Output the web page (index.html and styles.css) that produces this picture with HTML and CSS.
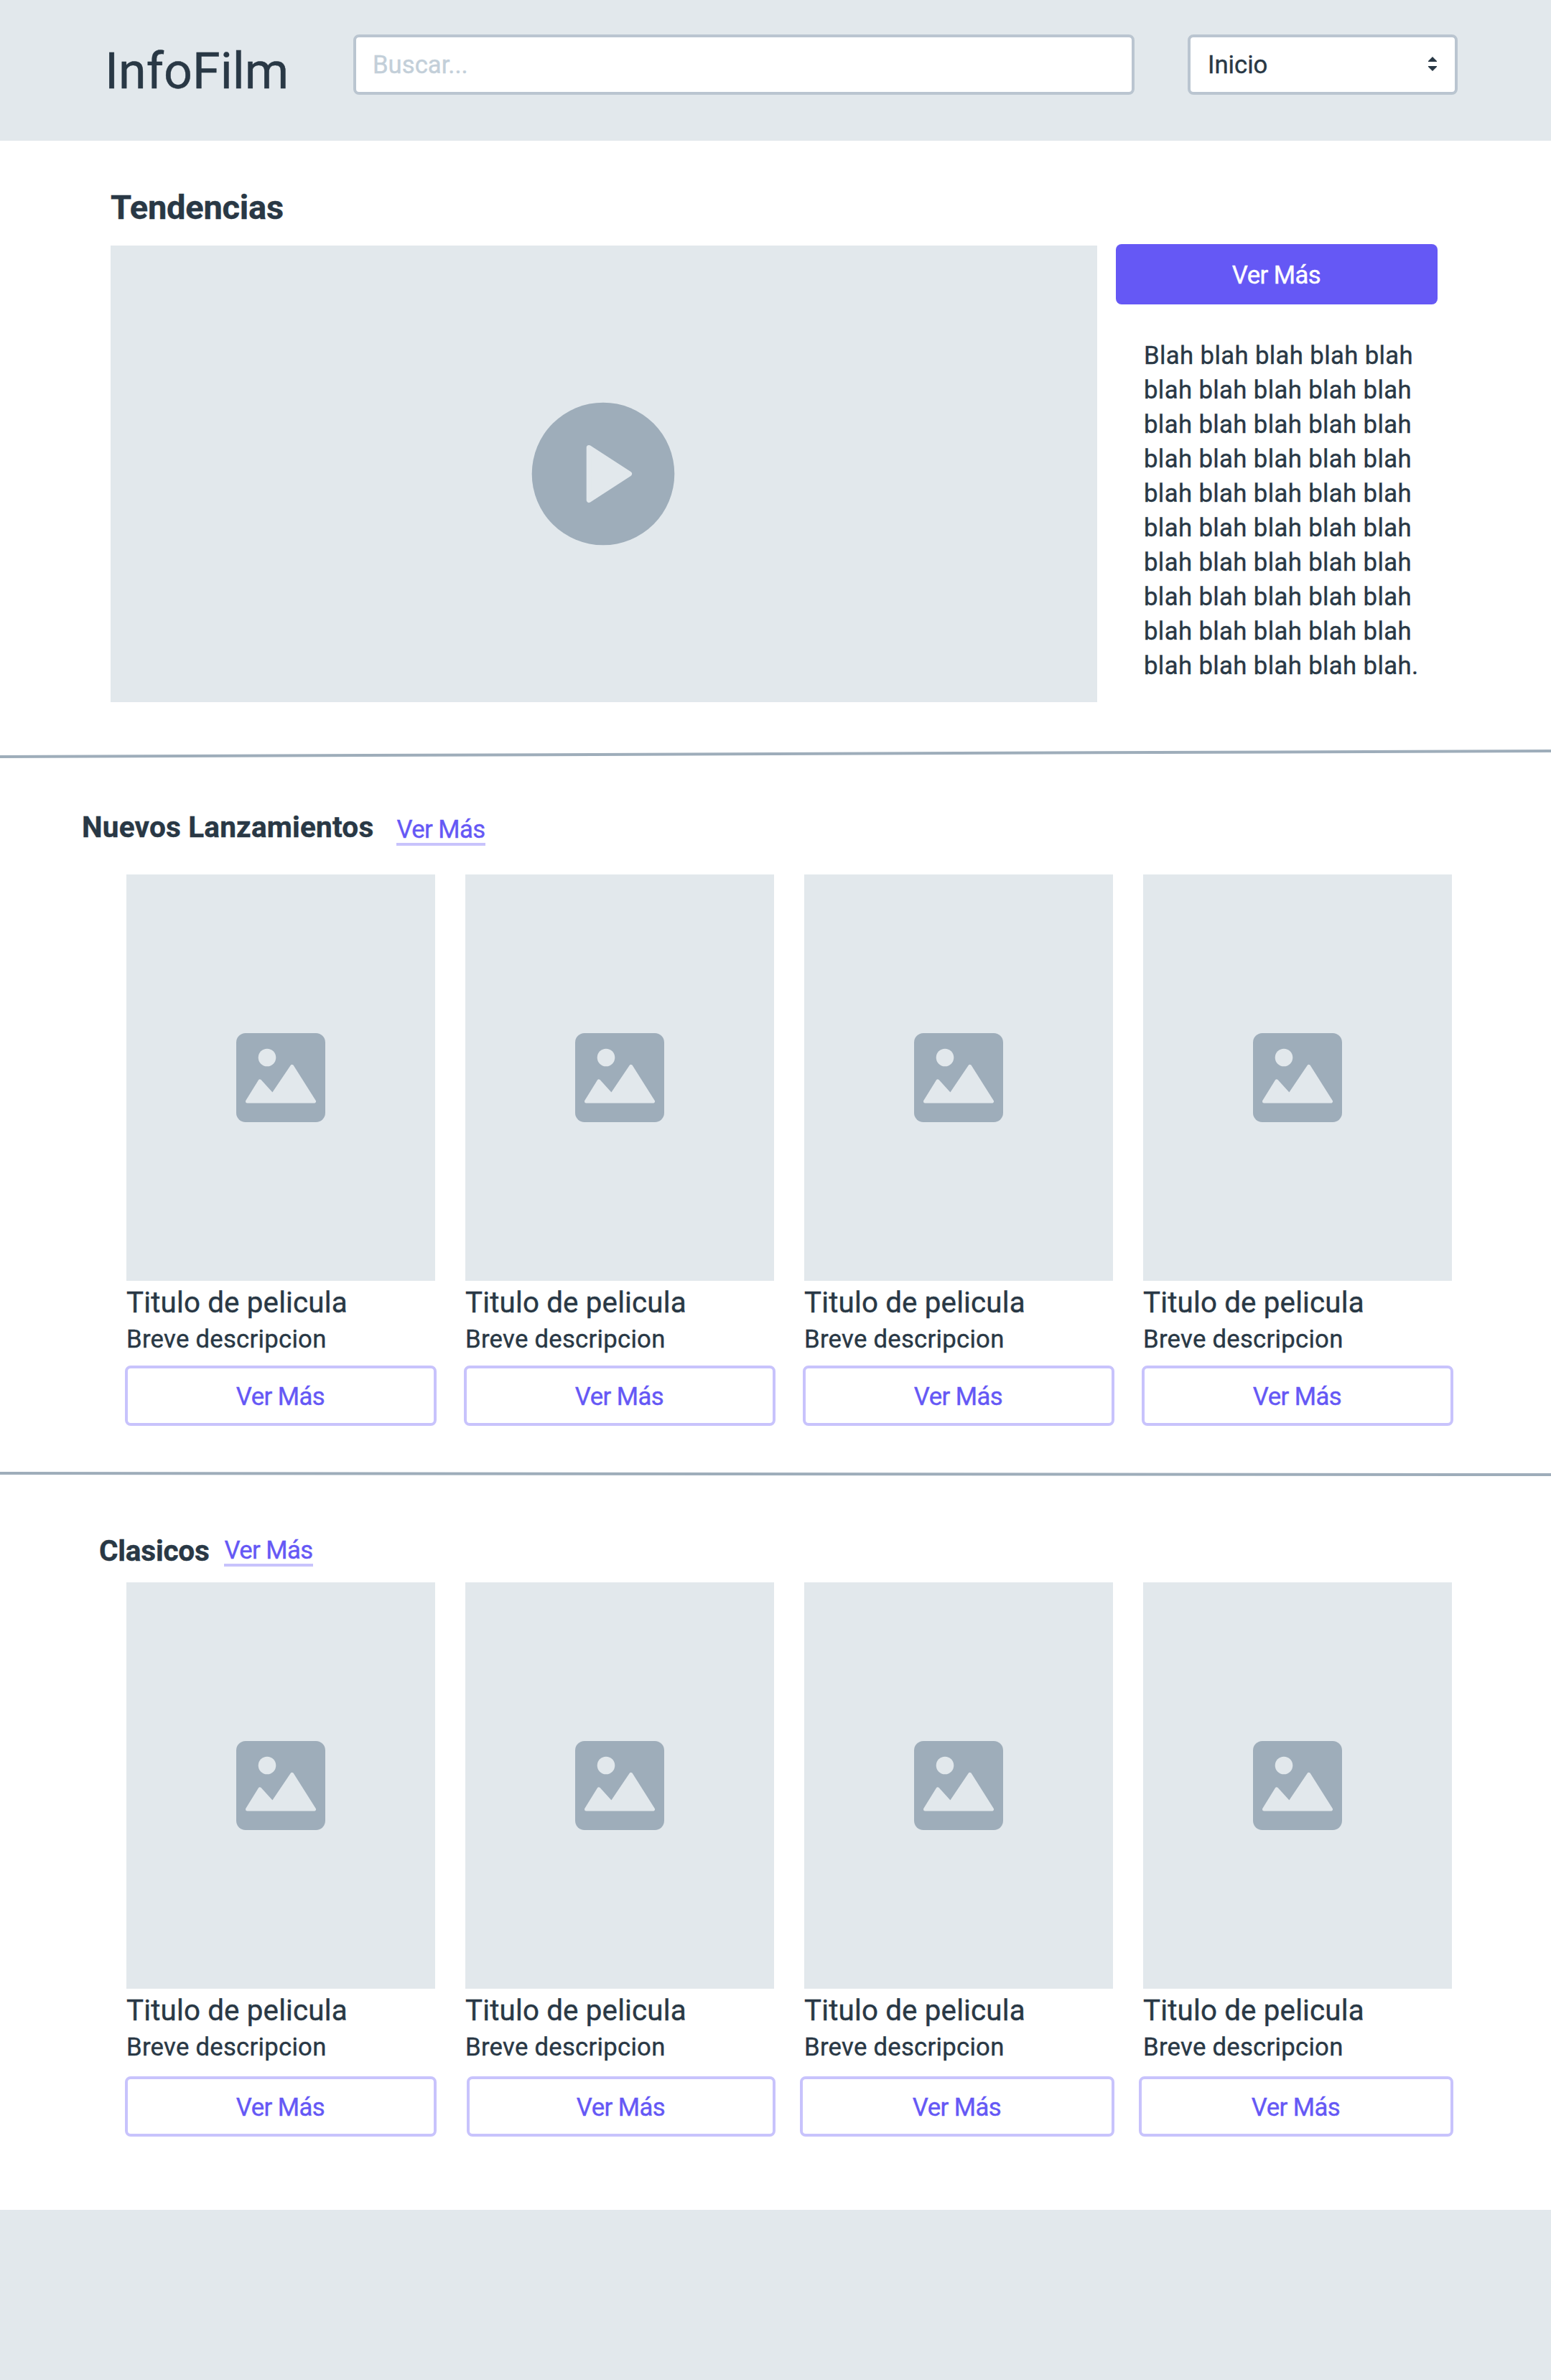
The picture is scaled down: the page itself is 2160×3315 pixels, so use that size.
FILE: index.html
```
<!DOCTYPE html>
<html lang="es">
<head>
<meta charset="utf-8">
<title>InfoFilm</title>
<link rel="stylesheet" href="styles.css">
</head>
<body>
<svg class="defs" width="0" height="0" aria-hidden="true">
  <symbol id="picture" viewBox="0 0 124 124">
    <rect width="124" height="124" rx="13" fill="#9eadba"/>
    <circle cx="43" cy="34" r="12.3" fill="#e2e8ec"/>
    <path d="M15.5 95.1 33 66.9 50.7 86.4 77.7 46.300 108.5 95.1Z" fill="#e2e8ec" stroke="#e2e8ec" stroke-width="5" stroke-linejoin="round"/>
  </symbol>
</svg>

<header class="topbar">
  <h1 class="brand">InfoFilm</h1>
  <input class="search" type="text" placeholder="Buscar...">
  <div class="select">
    <span>Inicio</span>
    <svg class="select-arrows" width="12" height="20" viewBox="0 0 12 20"><path d="M6 0 12 6V7H0V6ZM0 13H12V14L6 20 0 14Z" fill="#293845"/></svg>
  </div>
</header>

<main>
  <section class="trending">
    <h2 class="trending-title">Tendencias</h2>
    <div class="trending-row">
      <div class="video">
        <svg width="200" height="200" viewBox="0 0 200 200">
          <circle cx="100" cy="100" r="99.3" fill="#9eadba"/>
          <path d="M80.200 63.500 136.500 100 80.200 136.500Z" fill="#e2e8ec" stroke="#e2e8ec" stroke-width="7" stroke-linejoin="round"/>
        </svg>
      </div>
      <div class="trending-side">
        <a class="btn btn-solid">Ver Más</a>
        <p class="synopsis">Blah blah blah blah blah blah blah blah blah blah blah blah blah blah blah blah blah blah blah blah blah blah blah blah blah blah blah blah blah blah blah blah blah blah blah blah blah blah blah blah blah blah blah blah blah blah blah blah blah blah.</p>
      </div>
    </div>
  </section>

  <svg class="divider" width="2160" height="12" viewBox="0 0 2160 12"><path d="M0 10 2160 2" stroke="#9eadba" stroke-width="4"/></svg>

  <section class="releases">
    <div class="section-head">
      <h2 class="section-title">Nuevos Lanzamientos</h2>
      <a class="link">Ver Más</a>
    </div>
    <div class="cards">
      <article class="card">
        <div class="poster"><svg width="124" height="124"><use href="#picture"/></svg></div>
        <h3 class="card-title">Titulo de pelicula</h3>
        <p class="card-text">Breve descripcion</p>
        <a class="btn btn-outline">Ver Más</a>
      </article>
      <article class="card">
        <div class="poster"><svg width="124" height="124"><use href="#picture"/></svg></div>
        <h3 class="card-title">Titulo de pelicula</h3>
        <p class="card-text">Breve descripcion</p>
        <a class="btn btn-outline">Ver Más</a>
      </article>
      <article class="card">
        <div class="poster"><svg width="124" height="124"><use href="#picture"/></svg></div>
        <h3 class="card-title">Titulo de pelicula</h3>
        <p class="card-text">Breve descripcion</p>
        <a class="btn btn-outline">Ver Más</a>
      </article>
      <article class="card">
        <div class="poster"><svg width="124" height="124"><use href="#picture"/></svg></div>
        <h3 class="card-title">Titulo de pelicula</h3>
        <p class="card-text">Breve descripcion</p>
        <a class="btn btn-outline">Ver Más</a>
      </article>
    </div>
  </section>

  <svg class="divider" width="2160" height="10" viewBox="0 0 2160 10"><path d="M0 4 2160 6" stroke="#9eadba" stroke-width="4"/></svg>

  <section class="classics">
    <div class="section-head">
      <h2 class="section-title">Clasicos</h2>
      <a class="link">Ver Más</a>
    </div>
    <div class="cards">
      <article class="card">
        <div class="poster"><svg width="124" height="124"><use href="#picture"/></svg></div>
        <h3 class="card-title">Titulo de pelicula</h3>
        <p class="card-text">Breve descripcion</p>
        <a class="btn btn-outline">Ver Más</a>
      </article>
      <article class="card">
        <div class="poster"><svg width="124" height="124"><use href="#picture"/></svg></div>
        <h3 class="card-title">Titulo de pelicula</h3>
        <p class="card-text">Breve descripcion</p>
        <a class="btn btn-outline btn-narrow">Ver Más</a>
      </article>
      <article class="card">
        <div class="poster"><svg width="124" height="124"><use href="#picture"/></svg></div>
        <h3 class="card-title">Titulo de pelicula</h3>
        <p class="card-text">Breve descripcion</p>
        <a class="btn btn-outline btn-wide">Ver Más</a>
      </article>
      <article class="card">
        <div class="poster"><svg width="124" height="124"><use href="#picture"/></svg></div>
        <h3 class="card-title">Titulo de pelicula</h3>
        <p class="card-text">Breve descripcion</p>
        <a class="btn btn-outline btn-wide">Ver Más</a>
      </article>
    </div>
  </section>
</main>

<footer class="footer"></footer>
</body>
</html>
```
FILE: styles.css
```
* {
  box-sizing: border-box;
}

body {
  margin: 0;
  width: 2160px;
  min-height: 3315px;
  display: flex;
  flex-direction: column;
  background: #fff;
  color: #293845;
  font: 400 34.7px/48px Roboto, "Liberation Sans", sans-serif;
  -webkit-text-stroke-width: 0.4px;
}

h1, h2, h3, p {
  margin: 0;
}

.defs {
  position: absolute;
}

/* Top bar */
.topbar {
  height: 196px;
  padding-left: 146px;
  display: flex;
  align-items: flex-start;
  background: #e2e8ec;
}

.brand {
  width: 346px;
  margin-top: 59px;
  font-size: 70px;
  line-height: 80px;
  font-weight: 400;
}

.search,
.select {
  height: 84px;
  margin-top: 48px;
  border: 4px solid #bac5d0;
  border-radius: 8px;
  background: #fff;
}

.search {
  width: 1088px;
  padding: 0 24px 0 23px;
  font: inherit;
  line-height: normal;
}

.search::placeholder {
  color: #c3cfd9;
  opacity: 1;
}

.select {
  width: 376px;
  margin-left: 74px;
  padding: 0 25px 0 24px;
  display: flex;
  align-items: center;
  justify-content: space-between;
}

.select-arrows {
  margin-bottom: 2px;
}

/* Buttons and links */
.btn {
  display: flex;
  justify-content: center;
  align-items: center;
  height: 84px;
  padding: 2px 1px 0 0;
  border-radius: 8px;
  letter-spacing: -0.55px;
}

.btn-solid {
  width: 448px;
  background: #6558f5;
  color: #fff;
}

.btn-outline {
  margin: 13px -2px 0;
  border: 4px solid #c8c3fc;
  color: #6558f5;
}

.link {
  width: 124px;
  height: 42px;
  line-height: 38px;
  text-align: center;
  white-space: nowrap;
  letter-spacing: -0.6px;
  color: #6558f5;
  border-bottom: 4px solid #c8c3fc;
}

/* Trending */
.trending {
  padding: 64px 0 66px 154px;
}

.trending-title {
  margin-bottom: 25px;
  font-size: 47px;
  line-height: 57px;
  font-weight: 700;
  letter-spacing: -0.22px;
}

.trending-row {
  display: flex;
  align-items: flex-start;
}

.video {
  width: 1374px;
  height: 636px;
  padding-right: 2px;
  display: flex;
  align-items: center;
  justify-content: center;
  background: #e2e8ec;
}

.trending-side {
  margin: -2px 0 0 26px;
}

.synopsis {
  width: 439px;
  margin-top: 47px;
  padding-left: 39px;
  letter-spacing: 0.38px;
}

.divider {
  display: block;
}

/* Film rows */
.releases {
  padding: 72px 0 62px;
}

.classics {
  padding: 78px 0 102px;
}

.section-head {
  display: flex;
  align-items: flex-start;
}

.section-title {
  font-size: 40.5px;
  line-height: 48px;
  font-weight: 700;
}

.releases .section-head {
  height: 90px;
  padding-left: 114px;
}

.releases .section-title {
  width: 438px;
  letter-spacing: 0.2px;
}

.releases .link {
  margin-top: 8px;
}

.classics .section-head {
  height: 68px;
  padding-left: 138px;
}

.classics .section-title {
  width: 174px;
  letter-spacing: -0.2px;
}

.classics .link {
  margin-top: 4px;
}

.cards {
  padding-left: 176px;
  display: grid;
  grid-template-columns: repeat(4, 430px);
  column-gap: 42px;
}

.poster {
  height: 566px;
  display: flex;
  align-items: center;
  justify-content: center;
  background: #e2e8ec;
}

.card-title {
  margin-top: 4px;
  font-size: 40.3px;
  line-height: 53px;
  font-weight: 400;
  letter-spacing: 0.17px;
}

.card-text {
  letter-spacing: 0.27px;
}

.classics .btn-outline {
  margin-top: 17px;
}

.classics .btn-narrow {
  margin-left: 2px;
}

.classics .btn-wide {
  margin-left: -6px;
}

.footer {
  flex: 1;
  background: #e2e8ec;
}
```
